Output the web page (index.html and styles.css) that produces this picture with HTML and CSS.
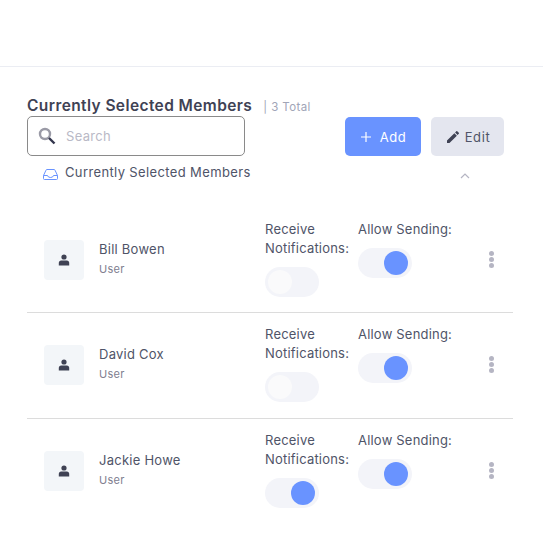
FILE: index.html
```html
<!DOCTYPE html>
<html>
<head>
    <title>Currently Selected Members</title>
    <link rel="stylesheet" href="styles.css">
</head>
<body>
    <div class="topbar"></div>
    <div class="section">
        <div class="heading">
            <span class="heading-title">Currently Selected Members</span>
            <span class="heading-count">| 3 Total</span>
        </div>
        <div class="toolbar">
            <div class="search-box">
                <svg class="search-icon" width="18" height="18" viewBox="0 0 18 18">
                    <circle cx="7" cy="7" r="5" fill="none" stroke="#9a9aa6" stroke-width="2.4"/>
                    <path d="M11 11l5.5 5.5" stroke="#33364d" stroke-width="2.4"/>
                </svg>
                <span class="search-text">Search</span>
            </div>
            <div class="buttons">
                <div class="btn btn-add">
                    <svg width="12" height="12" viewBox="0 0 12 12">
                        <path d="M6 1v10M1 6h10" stroke="#fff" stroke-width="1.2"/>
                    </svg>
                    Add
                </div>
                <div class="btn btn-edit">
                    <svg width="16" height="16" viewBox="0 0 24 24">
                        <path fill="#3f4254" d="M3 17.25V21h3.75L17.81 9.94l-3.75-3.75L3 17.25zM20.71 7.04a1 1 0 0 0 0-1.41l-2.34-2.34a1 1 0 0 0-1.41 0l-1.83 1.83 3.75 3.75 1.83-1.83z"/>
                    </svg>
                    Edit
                </div>
            </div>
        </div>
        <div class="group-row">
            <div class="group-label">
                <svg class="group-icon" width="15" height="11" viewBox="0 0 15 11">
                    <path d="M.5 6.5L3 1.2Q3.2.5 4 .5h7q.8 0 1 .7l2.500 5.300v3q0 1-1 1h-12q-1 0-1-1zM.5 6.500h4q.4 2 3 2t3-2h4" fill="none" stroke="#6993ff" stroke-width="1"/>
                </svg>
                Currently Selected Members
            </div>
            <svg class="chevron" width="10" height="6" viewBox="0 0 10 6">
                <path d="M1 5l4-4 4 4" fill="none" stroke="#b5b5c3" stroke-width="1.2"/>
            </svg>
        </div>
        <div class="members">
            <div class="member">
                <div class="avatar">
                    <svg width="12" height="12" viewBox="0 0 12 12">
                        <circle cx="6" cy="3" r="2.600" fill="#3f4254"/>
                        <path d="M.8 11.500V9q0-2.500 2.500-2.500h5.400q2.500 0 2.500 2.500v2.500z" fill="#3f4254"/>
                    </svg>
                </div>
                <div class="member-info">
                    <div class="member-name">Bill Bowen</div>
                    <div class="member-role">User</div>
                </div>
                <div class="col-notify">
                    <div class="col-label">Receive Notifications:</div>
                    <div class="toggle"><span class="knob"></span></div>
                </div>
                <div class="col-send">
                    <div class="col-label">Allow Sending:</div>
                    <div class="toggle on"><span class="knob"></span></div>
                </div>
                <div class="menu"><span></span><span></span><span></span></div>
            </div>
            <div class="member">
                <div class="avatar">
                    <svg width="12" height="12" viewBox="0 0 12 12">
                        <circle cx="6" cy="3" r="2.600" fill="#3f4254"/>
                        <path d="M.8 11.500V9q0-2.500 2.500-2.500h5.400q2.500 0 2.500 2.500v2.500z" fill="#3f4254"/>
                    </svg>
                </div>
                <div class="member-info">
                    <div class="member-name">David Cox</div>
                    <div class="member-role">User</div>
                </div>
                <div class="col-notify">
                    <div class="col-label">Receive Notifications:</div>
                    <div class="toggle"><span class="knob"></span></div>
                </div>
                <div class="col-send">
                    <div class="col-label">Allow Sending:</div>
                    <div class="toggle on"><span class="knob"></span></div>
                </div>
                <div class="menu"><span></span><span></span><span></span></div>
            </div>
            <div class="member">
                <div class="avatar">
                    <svg width="12" height="12" viewBox="0 0 12 12">
                        <circle cx="6" cy="3" r="2.600" fill="#3f4254"/>
                        <path d="M.8 11.500V9q0-2.500 2.500-2.500h5.400q2.500 0 2.500 2.500v2.500z" fill="#3f4254"/>
                    </svg>
                </div>
                <div class="member-info">
                    <div class="member-name">Jackie Howe</div>
                    <div class="member-role">User</div>
                </div>
                <div class="col-notify">
                    <div class="col-label">Receive Notifications:</div>
                    <div class="toggle on"><span class="knob"></span></div>
                </div>
                <div class="col-send">
                    <div class="col-label">Allow Sending:</div>
                    <div class="toggle on"><span class="knob"></span></div>
                </div>
                <div class="menu"><span></span><span></span><span></span></div>
            </div>
        </div>
    </div>
</body>
</html>
```

FILE: styles.css
```css
body {
    margin: 0;
    background-color: #fff;
    font-family: 'Inter', 'Open Sans', sans-serif;
    font-size: 13px;
    color: #4f5468;
}
.topbar {
    height: 66px;
    border-bottom: 1px solid #ebedf3;
}
.section {
    padding: 28px 39px 0 27px;
}
.heading {
    display: flex;
    align-items: baseline;
    height: 21px;
    line-height: 21px;
}
.heading-title {
    font-size: 15.5px;
    font-weight: 600;
    letter-spacing: 0.4px;
    color: #3f4254;
}
.heading-count {
    margin-left: 11px;
    font-size: 11.5px;
    color: #a1a5b7;
    letter-spacing: 0.4px;
}
.toolbar {
    display: flex;
    justify-content: space-between;
}
.search-box {
    display: flex;
    align-items: center;
    box-sizing: border-box;
    width: 218px;
    height: 40px;
    padding-left: 10px;
    border: 1px solid #8a8a8a;
    border-radius: 5px;
}
.search-text {
    margin-left: 10px;
    color: #b9b9c6;
    letter-spacing: 0.3px;
}
.buttons {
    display: flex;
    gap: 10px;
    padding-top: 1px;
}
.btn {
    display: flex;
    align-items: center;
    justify-content: center;
    box-sizing: border-box;
    height: 39px;
    border-radius: 5px;
    letter-spacing: 0.6px;
}
.btn-add {
    width: 76px;
    gap: 8px;
    background-color: #6993ff;
    color: #fff;
}
.btn-edit {
    width: 73px;
    gap: 4px;
    background-color: #e4e6ef;
}
.group-row {
    display: flex;
    justify-content: space-between;
    align-items: flex-start;
    height: 44px;
    padding: 7px 34px 0 16px;
}
.group-label {
    display: flex;
    align-items: center;
    gap: 7px;
    height: 18px;
    letter-spacing: 0.37px;
}
.group-icon {
    margin-top: 5px;
}
.chevron {
    margin-top: 10px;
}
.members {
    width: 486px;
}
.member {
    display: flex;
    box-sizing: border-box;
    height: 106px;
    padding: 13px 0 0 17px;
    border-bottom: 1px solid #dcdcdc;
}
.member + .member {
    padding-top: 12px;
}
.member:last-child {
    border-bottom: none;
}
.avatar {
    display: flex;
    align-items: center;
    justify-content: center;
    flex: none;
    width: 40px;
    height: 40px;
    margin-top: 20px;
    border-radius: 4px;
    background-color: #f3f6f9;
}
.member-info {
    flex: none;
    width: 166px;
    margin: 20px 0 0 15px;
}
.member-name {
    line-height: 19px;
    letter-spacing: 0.25px;
}
.member-role {
    margin-top: 1px;
    font-size: 11px;
    line-height: 18px;
    color: #80808f;
    letter-spacing: 0.3px;
}
.col-notify {
    flex: none;
    width: 93px;
}
.col-send {
    flex: none;
    width: 126px;
}
.col-label {
    line-height: 19px;
    letter-spacing: 0.2px;
}
.col-notify .col-label {
    width: 90px;
}
.toggle {
    display: flex;
    align-items: center;
    box-sizing: border-box;
    width: 54px;
    height: 30px;
    margin-top: 9px;
    padding: 0 4px 0 3px;
    border-radius: 15px;
    background-color: #f3f4f9;
}
.knob {
    width: 24px;
    height: 24px;
    border-radius: 50%;
    background-color: #fafafb;
}
.toggle.on {
    justify-content: flex-end;
}
.toggle.on .knob {
    background-color: #6993ff;
}
.menu {
    display: flex;
    flex-direction: column;
    gap: 1px;
    margin: 31px 0 0 5px;
}
.menu span {
    width: 5px;
    height: 5px;
    border-radius: 50%;
    background-color: #b5b5c3;
}
```
